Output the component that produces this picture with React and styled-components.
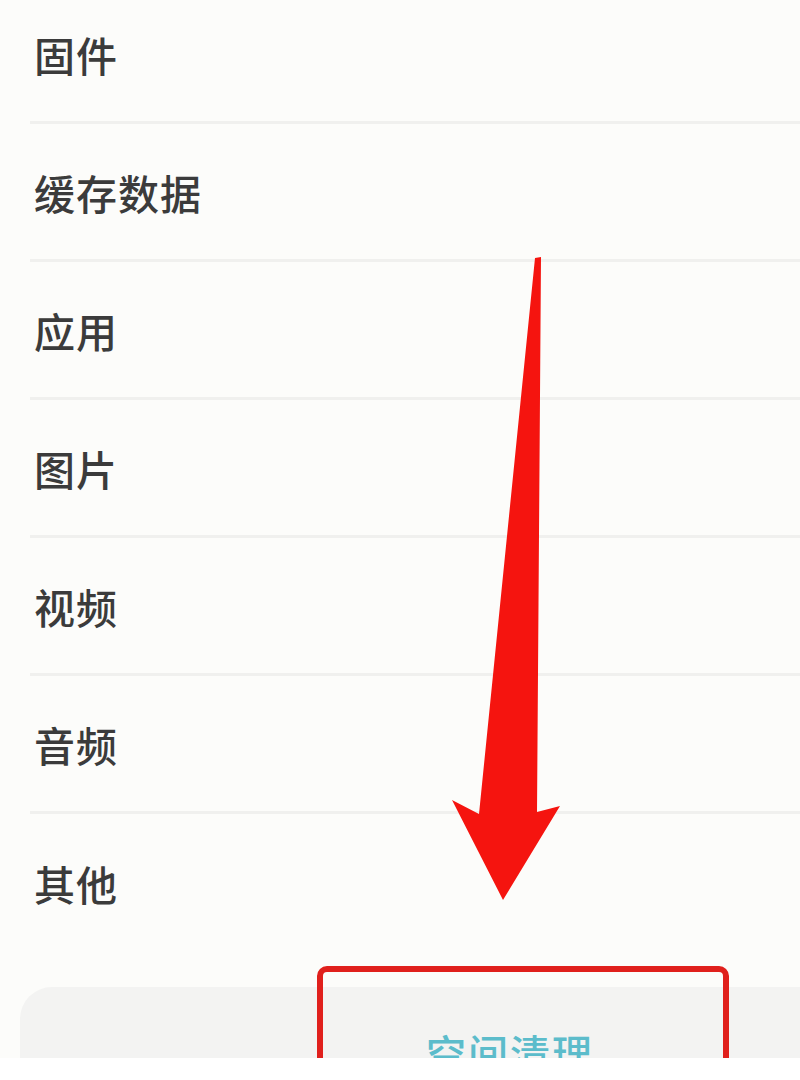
import React from "react";
import styled, { createGlobalStyle } from "styled-components";

const GlobalStyle = createGlobalStyle`
  html, body {
    margin: 0;
    padding: 0;
    background: #ffffff;
  }
  body {
    font-family: "Noto Sans CJK SC", "Noto Sans", sans-serif;
  }
`;

const items = ["固件", "缓存数据", "应用", "图片", "视频", "音频", "其他"];

const App = () => {
  return (
    <>
      <GlobalStyle />
      <Screen>
        <List>
          {items.map((label, i) => (
            <Row key={label} last={i === items.length - 1}>
              <Label>{label}</Label>
            </Row>
          ))}
        </List>
        <CleanCard>
          <CleanText>空间清理</CleanText>
        </CleanCard>
        <Highlight />
        <Arrow viewBox="0 0 800 1080" aria-hidden="true">
          <polygon
            points="535,258 541,257 537,812 560,806 503,900 452,800 479,814"
            fill="#f5140f"
          />
        </Arrow>
      </Screen>
    </>
  );
};

export default App;

const Screen = styled.div`
  position: relative;
  width: 800px;
  height: 1058px;
  overflow: hidden;
  background: #fcfcfa;
`;

const List = styled.div`
  display: flex;
  flex-direction: column;
  margin-top: -14px;
`;

const Row = styled.div`
  display: flex;
  align-items: center;
  height: 138px;
  box-sizing: border-box;
  margin-left: 30px;
  padding-left: 4px;
  border-bottom: ${(p) => (p.last ? "none" : "3px solid #f0f0ee")};
`;

const Label = styled.span`
  font-size: 41px;
  font-weight: 500;
  color: #3b3b3b;
  letter-spacing: 1px;
`;

const CleanCard = styled.div`
  display: flex;
  justify-content: center;
  align-items: flex-start;
  margin: 35px 0 0 20px;
  width: 980px;
  height: 140px;
  border-radius: 32px;
  background: #f3f3f2;
  padding-top: 36px;
  box-sizing: border-box;
`;

const CleanText = styled.span`
  font-size: 40px;
  font-weight: 500;
  color: #5cbccb;
  letter-spacing: 2px;
`;

const Highlight = styled.div`
  position: absolute;
  left: 317px;
  top: 966px;
  width: 412px;
  height: 130px;
  box-sizing: border-box;
  border: 6px solid #e0201c;
  border-radius: 10px;
`;

const Arrow = styled.svg`
  position: absolute;
  left: 0;
  top: 0;
  width: 800px;
  height: 1080px;
  pointer-events: none;
`;
